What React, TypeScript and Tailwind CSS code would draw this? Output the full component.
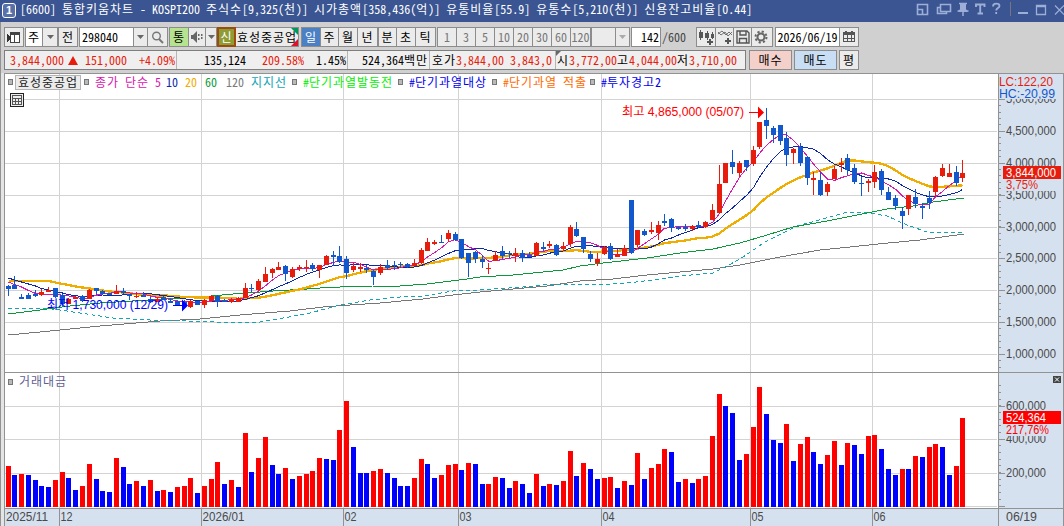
import type { ReactNode } from 'react';

type Candle = [number, number, number, number, number, number];

// [up, high, bodyTop, bodyBottom, low, volumeHeight]
const CANDLES: Candle[] = [
  [0, 285, 286, 289, 296, 41], [0, 276, 285, 289, 289, 32], [0, 294, 297, 299, 299, 33], [0, 293, 295, 299, 299, 32],
  [0, 290, 294, 296, 297, 27], [1, 289, 292, 295, 296, 21], [1, 287, 290, 292, 292, 20], [0, 288, 288, 297, 298, 27],
  [0, 294, 295, 304, 306, 35], [1, 298, 299, 304, 304, 29], [1, 296, 297, 299, 299, 17], [0, 295, 296, 301, 302, 21],
  [1, 289, 290, 299, 299, 43], [0, 288, 288, 291, 295, 28], [0, 290, 291, 294, 295, 16], [0, 293, 293, 295, 295, 15],
  [1, 285, 291, 294, 294, 49], [0, 288, 291, 293, 294, 40], [0, 294, 294, 296, 300, 23], [1, 292, 296, 297, 298, 26],
  [0, 292, 295, 297, 297, 21], [0, 297, 299, 302, 303, 27], [1, 298, 299, 302, 302, 16], [0, 296, 297, 300, 300, 17],
  [0, 298, 301, 303, 303, 15], [0, 301, 301, 305, 305, 20], [0, 300, 302, 305, 307, 21], [1, 300, 301, 307, 308, 29],
  [0, 301, 301, 305, 305, 14], [1, 299, 300, 305, 308, 21], [1, 295, 296, 301, 301, 28], [0, 295, 296, 302, 307, 45],
  [0, 299, 300, 302, 302, 23], [1, 298, 300, 302, 303, 27], [1, 297, 298, 302, 302, 20], [1, 283, 288, 298, 298, 74],
  [0, 284, 288, 289, 292, 35], [1, 279, 281, 290, 291, 49], [1, 267, 274, 282, 282, 70], [1, 268, 269, 273, 278, 42],
  [1, 262, 267, 270, 270, 33], [0, 265, 266, 274, 281, 39], [1, 267, 269, 277, 278, 28], [1, 265, 267, 269, 271, 31],
  [1, 260, 267, 268, 272, 33], [0, 263, 265, 269, 271, 36], [1, 265, 265, 270, 278, 49], [1, 255, 256, 265, 265, 48],
  [0, 251, 255, 257, 266, 47], [0, 246, 256, 262, 263, 77], [0, 256, 259, 273, 279, 106], [1, 263, 266, 270, 272, 60],
  [1, 263, 267, 269, 272, 34], [0, 265, 268, 270, 273, 34], [0, 270, 271, 277, 285, 36], [1, 264, 267, 273, 275, 38],
  [0, 260, 265, 268, 270, 34], [0, 261, 265, 266, 270, 29], [0, 262, 264, 265, 268, 21], [0, 263, 264, 267, 268, 21],
  [1, 259, 263, 266, 266, 29], [1, 248, 250, 263, 264, 48], [1, 238, 242, 251, 251, 43], [1, 240, 242, 244, 245, 29],
  [0, 235, 242, 243, 243, 32], [1, 230, 233, 239, 242, 42], [0, 232, 234, 240, 241, 43], [0, 239, 239, 258, 259, 37],
  [0, 253, 253, 263, 277, 44], [0, 251, 252, 259, 263, 43], [0, 255, 259, 262, 268, 23], [1, 263, 268, 269, 274, 23],
  [1, 251, 255, 261, 261, 30], [0, 246, 251, 256, 259, 29], [0, 251, 253, 254, 258, 19], [1, 248, 253, 256, 262, 26],
  [0, 250, 253, 258, 262, 23], [0, 252, 255, 257, 257, 14], [1, 242, 243, 256, 256, 33], [0, 242, 247, 249, 251, 21],
  [1, 241, 244, 246, 248, 23], [0, 244, 245, 255, 256, 22], [1, 242, 246, 249, 251, 26], [1, 225, 227, 244, 247, 56],
  [0, 222, 229, 236, 237, 31], [0, 237, 237, 249, 253, 44], [0, 251, 254, 259, 262, 38], [1, 253, 259, 263, 266, 28],
  [1, 246, 247, 254, 255, 29], [0, 243, 246, 259, 260, 30], [1, 249, 254, 257, 257, 19], [1, 245, 248, 256, 256, 26],
  [0, 200, 200, 253, 254, 22], [1, 230, 230, 245, 247, 54], [0, 229, 231, 235, 236, 28], [1, 222, 230, 232, 234, 39],
  [1, 221, 225, 233, 240, 43], [0, 214, 221, 223, 226, 58], [0, 218, 219, 228, 232, 55], [0, 226, 227, 229, 230, 25],
  [0, 224, 227, 229, 231, 28], [1, 225, 226, 229, 231, 24], [0, 221, 225, 227, 228, 28], [1, 221, 222, 227, 228, 31],
  [1, 204, 210, 220, 220, 71], [1, 165, 184, 213, 214, 113], [1, 163, 163, 183, 183, 101], [0, 150, 162, 167, 174, 94],
  [1, 161, 163, 173, 177, 47], [0, 160, 160, 167, 171, 53], [1, 146, 150, 164, 166, 80], [1, 122, 122, 147, 149, 120],
  [0, 108, 120, 126, 139, 93], [0, 126, 128, 135, 143, 67], [0, 125, 125, 141, 145, 64], [0, 132, 138, 155, 166, 83],
  [1, 148, 149, 153, 164, 46], [0, 143, 147, 163, 166, 63], [0, 156, 157, 178, 185, 70], [1, 172, 178, 180, 195, 55],
  [0, 172, 180, 195, 196, 43], [1, 182, 184, 192, 196, 52], [1, 166, 169, 179, 179, 66], [1, 158, 163, 165, 172, 42],
  [0, 154, 158, 170, 175, 64], [0, 164, 168, 182, 184, 62], [0, 177, 183, 184, 196, 53], [1, 179, 181, 183, 192, 71],
  [1, 165, 172, 182, 188, 72], [0, 169, 171, 190, 195, 58], [0, 187, 192, 200, 200, 38], [0, 195, 198, 206, 210, 32],
  [0, 207, 211, 216, 229, 38], [1, 195, 195, 209, 215, 38], [0, 189, 197, 204, 208, 51], [0, 203, 206, 208, 219, 50],
  [0, 191, 198, 203, 209, 60], [1, 176, 177, 192, 197, 63], [1, 164, 168, 176, 177, 60], [1, 164, 173, 177, 177, 32],
  [0, 166, 172, 183, 186, 41], [1, 160, 173, 178, 182, 89],
];

// R = red volume bar, B = blue
const VOLUME_COLORS =
  'RBRBBBBRRBBRRBBBRBBRBRBRBRRRBRRRBRBRBRRBBRBRRRRBBRRB' +
  'BBRRBBBBRRBBRRRBRBBRRBBRBBRBRBRRBRBBRRBRBRBRRRBBRBRR' +
  'RRBBBRRRBBBRBRRBBRRBRBBRRBBBRBRBRRBBRR';

const MONTHS = [
  { x: 59, label: '12' },
  { x: 201, label: '2026/01' },
  { x: 343, label: '02' },
  { x: 458, label: '03' },
  { x: 601, label: '04' },
  { x: 750, label: '05' },
  { x: 872, label: '06' },
];

const PRICES = [
  { y: 99, label: '5,000,000' },
  { y: 131, label: '4,500,000' },
  { y: 163, label: '4,000,000' },
  { y: 195, label: '3,500,000' },
  { y: 227, label: '3,000,000' },
  { y: 258, label: '2,500,000' },
  { y: 290, label: '2,000,000' },
  { y: 322, label: '1,500,000' },
  { y: 354, label: '1,000,000' },
];

const VOLUMES = [
  { y: 406, label: '600,000' },
  { y: 439, label: '400,000' },
  { y: 473, label: '200,000' },
  { y: 506, label: '' },
];

const MA60 =
  '8,314 40,310 70,306 100,303 133,301 167,299 200,297 233,294 273,291 307,289 320,288 340,287 373,286 400,286 427,284 467,279 480,277 513,275 563,270 580,266 603,263 647,258 680,253 713,249 740,243 767,235 793,227 827,221 867,213 887,209 913,206 933,202 964,198';
const MA120 =
  '8,335 40,332 100,326 160,321 200,319 240,315 290,311 323,307 350,305 380,303 423,299 453,295 480,292 513,289 547,286 580,281 613,279 647,275 680,272 713,269 740,265 780,257 820,250 850,247 878,244 920,240 964,234';
const SUPPORT =
  '8,309 17,308 43,308 60,310 80,313 113,318 150,320 187,321 240,323 260,322 278,319 310,313 340,305 370,300 400,297 423,296 453,291 480,290 523,287 553,284 583,284 597,285 627,283 653,280 680,276 713,273 727,266 740,259 765,242 797,226 830,217 847,212 870,213 887,216 907,225 930,233 964,232';

const barX = (i: number) => Math.floor(6 + i * 6.773);

// lead holds the values for which there is no full window yet
function average(period: number, lead: number[]) {
  const closes = CANDLES.map((c) => (c[0] ? c[2] : c[3] - 1));
  return closes
    .map((_, i) => {
      const window = closes.slice(i - period + 1, i + 1);
      const y = i < lead.length ? lead[i] : window.reduce((a, b) => a + b, 0) / period;
      return `${barX(i) + 2.5},${y.toFixed(1)}`;
    })
    .join(' ');
}

const MA5 = average(5, [282, 284.5, 287, 290.5]);
const MA10 = average(10, [278, 280, 282, 284, 286, 288.5, 290, 291.5, 293]);
const MA20 = average(20, [281, 281, 281, 281, 281, 281, 281, 282.5, 284, 285, 286.5, 287.5, 288.5, 289.5, 290.5, 291.5, 292, 292.5, 293]);

// Hangul takes a 12px cell, everything else half of that
function Txt({ children, className = '' }: { children: string; className?: string }) {
  return (
    <span className={`whitespace-pre pb-px font-['Noto_Sans_CJK_KR',sans-serif] text-[12px] leading-[12px] ${className}`}>
      {children.split(/([가-힣]+)/).map((part, i) =>
        i % 2 ? (
          <span key={i} className="tracking-[0.96px]">{part}</span>
        ) : (
          <span key={i} className="[font-feature-settings:'hwid'_1,'kern'_0]">{part}</span>
        )
      )}
    </span>
  );
}

function Cell({ children, className }: { children?: ReactNode; className: string }) {
  return <div className={`flex h-full shrink-0 items-center justify-center overflow-hidden ${className}`}>{children}</div>;
}

function Group({ children, className }: { children: ReactNode; className: string }) {
  return (
    <div className={`flex h-[20px] shrink-0 divide-x divide-[#8c8c8c] border border-[#8c8c8c] bg-[#ebebeb] ${className}`}>
      {children}
    </div>
  );
}

function Arrow({ color = '#666' }: { color?: string }) {
  return (
    <svg width="7" height="4" viewBox="0 0 7 4">
      <path d="M0 0h7L3.5 4z" fill={color} />
    </svg>
  );
}

function TitleBar() {
  return (
    <header className="flex h-[22px] items-center bg-[#3a5592] pl-[2px] text-white">
      <div className="mb-[2px] mr-[4px] flex h-[15px] w-[14px] shrink-0 items-center justify-center rounded-[3px] border border-white bg-[#5871a8] font-['Liberation_Sans',sans-serif] text-[11px] font-bold leading-none">
        1
      </div>
      <Txt className="mb-[3px]">[6600] 통합키움차트 - KOSPI200 주식수[9,325(천)] 시가총액[358,436(억)] 유통비율[55.9] 유통수[5,210(천)] 신용잔고비율[0.44]</Txt>
      <svg className="ml-auto shrink-0" width="152" height="22" viewBox="0 0 152 22" fill="none" stroke="#9dafd6" strokeWidth="1.6">
        <path d="M5.5 4.5h10v10h-10zM5.5 9.5h5v5" />
        <path d="M28.5 4.5h10v7h-10zM28.5 7.5h-3v6h9v-2" />
        <path d="M47 3.5h8M45.500 11h11M51 11v5" strokeWidth="1.500" />
        <path d="M48 4h6v5l2 3H46l2-3z" fill="#9dafd6" stroke="none" />
        <path d="M64 7V4.500h8.500V7M68.200 4.500v9M65.500 13.500h5.500" strokeWidth="1.900" />
        <path d="M81 6.500c0-4 6.500-3.500 6.500-.5 0 2-3.300 2.200-3.300 4.500M84.200 12v2" strokeWidth="1.800" />
        <path d="M98.500 2v14" stroke="#74777f" strokeWidth="1" />
        <path d="M106 13h10" strokeWidth="2" />
        <path d="M124.500 5.500h9v9h-9zM124 6.500h10" strokeWidth="1.300" />
        <path d="M143 5.500l9 9M152 5.500l-9 9" strokeWidth="1.200" />
      </svg>
    </header>
  );
}

function TopRow() {
  return (
    <div className="flex h-[20px] items-center">
      <Group className="w-[20px]">
        <Cell className="w-[18px]">
          <svg width="14" height="14" viewBox="0 0 14 14" shapeRendering="crispEdges">
            <path d="M3.500 2.500h9v10h-9zM7.500 2v10" fill="#fff" stroke="#444" />
            <path d="M3 3h10v2H3z" fill="#444" />
            <path d="M0 4v8l5-4z" fill="#333" />
          </svg>
        </Cell>
      </Group>
      <Group className="ml-px w-[33px]">
        <Cell className="w-[17px] bg-white"><Txt>주</Txt></Cell>
        <Cell className="w-[14px]"><Arrow /></Cell>
      </Group>
      <Group className="w-[20px]">
        <Cell className="w-[18px]"><Txt>전</Txt></Cell>
      </Group>
      <Group className="ml-px w-[89px]">
        <Cell className="w-[54px] justify-start! bg-white pl-[2px]"><Txt>298040</Txt></Cell>
        <Cell className="w-[14px]"><Arrow /></Cell>
        <Cell className="w-[19px]">
          <svg width="13" height="13" viewBox="0 0 13 13" fill="none" stroke="#777">
            <circle cx="5.500" cy="5" r="3.800" strokeWidth="1.400" />
            <path d="M8 8l4 4" strokeWidth="2" />
          </svg>
        </Cell>
      </Group>
      <Group className="ml-px w-[48px]">
        <Cell className="w-[19px] bg-[#b6e38f]"><Txt>통</Txt></Cell>
        <Cell className="w-[17px]">
          <svg width="13" height="12" viewBox="0 0 13 12" fill="#666">
            <path d="M0 4h2l4-4v12L2 8H0zM7 3h1.500v2H7zM7 7h1.500v2H7zM10 3h1.500v2H10zM10 6h1.500v2H10z" />
          </svg>
        </Cell>
        <Cell className="w-[10px]"><Arrow /></Cell>
      </Group>
      <Group className="w-[82px]">
        <Cell className="-ml-px -mt-px h-[20px]! w-[19px] border-2! border-[#9c4c0c]! bg-[#8f9c36] text-white"><Txt>신</Txt></Cell>
        <Cell className="relative w-[62px] border-l-0!">
          <svg className="absolute right-0 top-0" width="7" height="18" viewBox="0 0 7 18">
            <path d="M0 0h7v7z" fill="#00995c" />
            <path d="M7 11v7H0z" fill="#e0112b" />
          </svg>
          <Txt className="relative">효성중공업</Txt>
        </Cell>
      </Group>
      <Group className="ml-[2px] w-[77px]">
        <Cell className="w-[19px] bg-[#4b80c5] text-white"><Txt>일</Txt></Cell>
        <Cell className="w-[18px]"><Txt>주</Txt></Cell>
        <Cell className="w-[19px]"><Txt>월</Txt></Cell>
        <Cell className="w-[19px]"><Txt>년</Txt></Cell>
      </Group>
      <Group className="w-[58px]">
        <Cell className="w-[18px]"><Txt>분</Txt></Cell>
        <Cell className="w-[19px]"><Txt>초</Txt></Cell>
        <Cell className="w-[19px]"><Txt>틱</Txt></Cell>
      </Group>
      <Group className="ml-px w-[154px] text-[#777]">
        {['1', '3', '5', '10', '20', '30', '60', '120'].map((n) => (
          <Cell key={n} className="w-[19px]"><Txt>{n}</Txt></Cell>
        ))}
      </Group>
      <Group className="w-[39px]">
        <Cell className="w-[24px]" />
        <Cell className="w-[13px]"><Arrow color="#aaa" /></Cell>
      </Group>
      <Group className="ml-px w-[30px]">
        <Cell className="w-[28px] justify-end! bg-white pr-px"><Txt>142</Txt></Cell>
      </Group>
      <Txt className="w-[35px] pl-px text-[#444]">/600</Txt>
      <Group className="w-[77px]">
        <Cell className="w-[19px]">
          <svg width="17" height="16" viewBox="0 0 17 16" fill="#555" shapeRendering="crispEdges">
            <path d="M1 3h4v6H1zM2 1h1v10H2zM7 4h4v5H7zM9 2h1v9H9zM13 5h3v4h-3zM14 3h1v7h-1zM9 12h6v2H9zM11 10h2v6h-2z" />
          </svg>
        </Cell>
        <Cell className="w-[18px]">
          <svg width="16" height="16" viewBox="0 0 16 16" fill="none" stroke="#555">
            <path d="M1 5l4-3 4 4 3-3 3 3M1 3l3 3 4-3 3 4 4-4" strokeWidth=".8" />
            <path d="M8 12h6M11 9v6" strokeWidth="2" />
          </svg>
        </Cell>
        <Cell className="w-[18px]">
          <svg width="14" height="14" viewBox="0 0 14 14" fill="none" stroke="#555" strokeWidth="1.400">
            <path d="M1 1h10l2 2v10H1zM4 1v4h6V1M3.500 13V8.500h7V13" />
          </svg>
        </Cell>
        <Cell className="w-[17px]">
          <svg width="14" height="14" viewBox="0 0 14 14" fill="none" stroke="#666">
            <circle cx="7" cy="7" r="3.500" strokeWidth="2" />
            <circle cx="7" cy="7" r="5.500" strokeWidth="2" strokeDasharray="2.160 2.160" />
          </svg>
        </Cell>
      </Group>
      <Group className="ml-[2px] w-[84px]">
        <Cell className="w-[64px] bg-white"><Txt>2026/06/19</Txt></Cell>
        <Cell className="w-[18px]">
          <svg width="12" height="12" viewBox="0 0 12 12" fill="none" stroke="#555" shapeRendering="crispEdges">
            <path d="M.5 1.500h11v9H.5zM4.500 4v7M8.500 4v7M0 7.500h12" />
            <path d="M0 1h12v3H0zM2 0h2v1H2zM8 0h2v1H8z" fill="#555" stroke="none" />
          </svg>
        </Cell>
      </Group>
    </div>
  );
}

function QuoteRow() {
  return (
    <div className="mt-[3px] flex h-[20px] items-center">
      <div className="flex h-[20px] w-[742px] shrink-0 items-center divide-x divide-[#b5b5b5] border border-[#7e7e7e] bg-[#efefef] text-[#e71c0c]">
        <div className="flex h-full w-[172px] shrink-0 items-center pl-[5px] pr-px">
          <Txt>3,844,000</Txt>
          <svg className="ml-[4px] mr-[7px]" width="10" height="9" viewBox="0 0 10 9">
            <path d="M5 0l5 9H0z" fill="#e71c0c" />
          </svg>
          <Txt>151,000</Txt>
          <Txt className="ml-auto">+4.09%</Txt>
        </div>
        <div className="flex h-full w-[171px] shrink-0 items-center pl-[27px] pr-px">
          <Txt className="text-black">135,124</Txt>
          <Txt className="ml-[16px]">209.58%</Txt>
          <Txt className="ml-auto text-black">1.45%</Txt>
        </div>
        <div className="flex h-full w-[82px] shrink-0 items-center justify-end pr-px">
          <Txt className="text-black">524,364백만</Txt>
        </div>
        <div className="flex h-full w-[126px] shrink-0 items-center pl-[2px]">
          <Txt className="text-black">호가</Txt>
          <Txt>3,844,00 3,843,0</Txt>
        </div>
        <div className="relative flex h-full items-center pl-px">
          <svg className="absolute left-0 top-0" width="5" height="5" viewBox="0 0 5 5">
            <path d="M0 0h5L0 5z" fill="#666" />
          </svg>
          <Txt className="text-black">시</Txt>
          <Txt>3,772,00</Txt>
          <Txt className="text-black">고</Txt>
          <Txt>4,044,00</Txt>
          <Txt className="text-black">저</Txt>
          <Txt>3,710,00</Txt>
        </div>
      </div>
      <div className="ml-[3px] flex h-[20px] w-[43px] items-center justify-center border border-[#8c8c8c] bg-[#f3d0ca]"><Txt>매수</Txt></div>
      <div className="ml-[2px] flex h-[20px] w-[43px] items-center justify-center border border-[#8c8c8c] bg-[#c8def4]"><Txt>매도</Txt></div>
      <div className="ml-[2px] flex h-[20px] w-[20px] items-center justify-center border border-[#8c8c8c] bg-[#ebebeb]"><Txt>평</Txt></div>
    </div>
  );
}

function Bullet({ className = '' }: { className?: string }) {
  return <i className={`h-[6px] w-[5px] shrink-0 border border-[#777] bg-[#b9b9b9] ${className}`} />;
}

function Legend() {
  return (
    <div className="absolute left-[8px] top-[1px] flex h-[16px] items-center">
      <Bullet />
      <Txt className="ml-[2px] mr-[3px] flex h-[15px] w-[66px] items-center justify-center border border-[#b4b4b4] bg-[#ececec] text-[#222]">효성중공업</Txt>
      <Bullet />
      <Txt className="w-[77px] pl-[6px] text-[#d916ae]">종가 단순 5</Txt>
      <Txt className="w-[19px] text-[#0e29a8]">10</Txt>
      <Txt className="w-[20px] text-[#f0ad00]">20</Txt>
      <Txt className="w-[21px] text-[#0b9a3a]">60</Txt>
      <Txt className="w-[25px] text-[#7b7b7b]">120</Txt>
      <Txt className="w-[41px] text-[#12a5b6]">지지선</Txt>
      <Bullet />
      <Txt className="w-[101px] pl-[6px] text-[#00f000]">#단기과열발동전</Txt>
      <Bullet />
      <Txt className="w-[89px] pl-[6px] text-[#0000f0]">#단기과열대상</Txt>
      <Bullet />
      <Txt className="w-[93px] pl-[6px] text-[#ff6a00]">#단기과열 적출</Txt>
      <Bullet />
      <Txt className="pl-[6px] text-[#0000f0]">#투자경고2</Txt>
    </div>
  );
}

function AxisText({ x, y, children, width, fill = '#4a4a4a' }: { x: number; y: number; children: string; width: number; fill?: string }) {
  return (
    <text x={x} y={y} fill={fill} textLength={width} lengthAdjust="spacingAndGlyphs">
      {children}
    </text>
  );
}

function Chart() {
  return (
    <svg
      className="block font-['Liberation_Sans','Noto_Sans_CJK_KR',sans-serif] text-[12.5px]"
      width="1064"
      height="453"
      viewBox="0 73 1064 453"
    >
      <g shapeRendering="crispEdges">
        <rect x="0" y="73" width="1064" height="453" fill="#fff" />
        <rect x="998" y="73" width="66" height="453" fill="#d6e1ef" />
        <rect x="4" y="508" width="1060" height="18" fill="#d6e1ef" />

        <g fill="#d3d3d3">
          {MONTHS.map((m) => <rect key={m.x} x={m.x} y="74" width="1" height="434" />)}
          {PRICES.map((p) => <rect key={p.y} x="5" y={p.y} width="992" height="1" />)}
          {VOLUMES.map((v) => <rect key={v.y} x="5" y={v.y} width="992" height="1" />)}
        </g>

        {CANDLES.map((c, i) => (
          <rect key={i} x={barX(i)} y={507 - c[5]} width="5" height={c[5]} fill={VOLUME_COLORS[i] === 'R' ? '#f00' : '#00f'} />
        ))}

        <g fill="none">
          <polyline points={MA120} stroke="#777" />
          <polyline points={SUPPORT} stroke="#12a5b6" strokeDasharray="4 3" />
          <polyline points={MA60} stroke="#0b9a3a" />
          <polyline points={MA20} stroke="#f0ad00" strokeWidth="2.300" />
          <polyline points={MA10} stroke="#0e29a8" />
          <polyline points={MA5} stroke="#d916ae" />
        </g>

        {CANDLES.map(([up, high, top, bottom, low], i) => (
          <g key={i} fill={up ? '#e71c0c' : '#1258cc'}>
            <rect x={barX(i) + 2} y={high} width="1" height={low - high} />
            <rect x={barX(i)} y={top} width="5" height={bottom - top} />
          </g>
        ))}

        {/* frame and dividers */}
        <g fill="#929292">
          <rect x="0" y="73" width="1" height="453" />
          <rect x="4" y="73" width="1" height="453" />
          <rect x="4" y="73" width="1060" height="1" />
          <rect x="4" y="372" width="1060" height="1" />
          <rect x="4" y="508" width="1060" height="1" />
          <rect x="998" y="73" width="1" height="453" />
          <rect x="1063" y="73" width="1" height="453" />
          {MONTHS.map((m) => <rect key={m.x} x={m.x} y="508" width="1" height="18" />)}
          {Array.from({ length: 45 }, (_, i) => (
            <rect key={i} x="999" y={Math.floor(86.500 + i * 6.375)} width="2" height="1" />
          ))}
          {PRICES.map((p) => <rect key={p.y} x="999" y={p.y} width="6" height="1" />)}
          {Array.from({ length: 19 }, (_, i) => (
            <rect key={i} x="999" y={Math.floor(506 - i * 6.670)} width="2" height="1" />
          ))}
          {VOLUMES.map((v) => <rect key={v.y} x="999" y={v.y} width="6" height="1" />)}
        </g>
        <rect x="1" y="73" width="3" height="453" fill="#e4e4e4" />
      </g>

      {PRICES.map((p) => <AxisText key={p.y} x={1006} y={p.y + 4} width={50}>{p.label}</AxisText>)}
      {VOLUMES.filter((v) => v.label).map((v) => <AxisText key={v.y} x={1006} y={v.y + 4} width={40}>{v.label}</AxisText>)}

      {/* price labels */}
      <rect x="999" y="74" width="64" height="25" fill="#d6e1ef" />
      <AxisText x={999} y={86} width={54} fill="#e71c0c">LC:122,20</AxisText>
      <AxisText x={999} y={98} width={56} fill="#1258cc">HC:-20,99</AxisText>
      <rect x="1003" y="179" width="59" height="12" fill="#d6e1ef" />
      <rect x="1003" y="166" width="58" height="13" fill="#e71c0c" />
      <AxisText x={1006} y={177} width={50} fill="#fff">3,844,000</AxisText>
      <AxisText x={1006} y={189} width={32} fill="#e71c0c">3,75%</AxisText>

      {/* volume labels */}
      <rect x="1003" y="424" width="59" height="12" fill="#d6e1ef" />
      <rect x="1003" y="411" width="58" height="13" fill="#f00" />
      <AxisText x={1006} y={422} width={40} fill="#fff">524,364</AxisText>
      <AxisText x={1006} y={434} width={43} fill="#f00">217,76%</AxisText>
      <rect x="1053" y="376" width="8" height="7" fill="#444" />
      <path d="M1055 377.500l4 4M1059 377.500l-4 4" stroke="#fff" />

      <AxisText x={6} y={521} width={42}>2025/11</AxisText>
      {MONTHS.map((m) => (
        <AxisText key={m.x} x={m.x + 1.500} y={521} width={m.label.length * 6}>{m.label}</AxisText>
      ))}
      <AxisText x={1006} y={521} width={31}>06/19</AxisText>

      <AxisText x={622} y={116} width={122} fill="#f00">최고 4,865,000 (05/07)</AxisText>
      <path d="M749 112h9v-5.500l6 6-6 6V113h-9z" fill="#f00" />
      <AxisText x={47} y={309} width={121} fill="#00f">최저 1,730,000 (12/29)</AxisText>
      <path d="M173 305h9v-5.500l6 6-6 6V306h-9z" fill="#00f" />

      {/* table toggle */}
      <g shapeRendering="crispEdges" fill="none" stroke="#222">
        <rect x="10.500" y="93.500" width="13" height="13" fill="#eee" />
        <path d="M12.500 95.500h9v9h-9zM12 98.500h10M12 101.500h10M15.500 98v7M18.500 98v7" stroke="#555" />
      </g>
    </svg>
  );
}

export default function App() {
  return (
    <div className="flex h-[526px] w-[1064px] flex-col overflow-hidden bg-[#d0d0d0] text-black">
      <TitleBar />
      <div className="h-[51px] border-l border-[#929292] pl-[3px] pt-[5px]">
        <TopRow />
        <QuoteRow />
      </div>
      <main className="relative h-[453px]">
        <Chart />
        <Legend />
        <div className="absolute left-[8px] top-[301px] flex h-[15px] items-center">
          <Bullet className="mr-[6px]" />
          <Txt className="text-[#5f5f95]">거래대금</Txt>
        </div>
      </main>
    </div>
  );
}
